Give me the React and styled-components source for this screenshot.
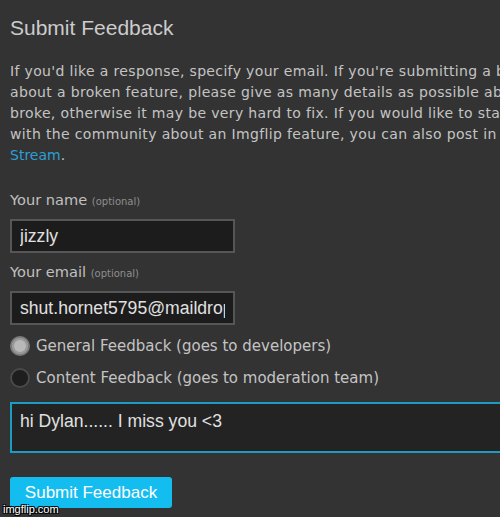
import React from "react";
import styled, { createGlobalStyle } from "styled-components";

const GlobalStyle = createGlobalStyle`
  html, body {
    margin: 0;
    padding: 0;
    background: #333333;
    overflow: hidden;
  }
  body {
    font-family: "DejaVu Sans", Verdana, sans-serif;
    color: #c8c8c8;
  }
`;

const Page = styled.div`
  position: relative;
  width: 500px;
  height: 517px;
  padding: 16px 0 0 10px;
  box-sizing: border-box;
  overflow: hidden;
`;

const Title = styled.h1`
  margin: 0;
  font-family: "Liberation Sans", Arial, sans-serif;
  font-weight: normal;
  font-size: 21px;
  line-height: 24px;
  color: #cccccc;
`;

const Intro = styled.p`
  margin: 21px 0 0;
  font-size: 14px;
  letter-spacing: 0.35px;
  line-height: 21px;
  white-space: nowrap;
  color: #c4c4c4;
`;

const Link = styled.a`
  color: #2a9fd6;
  letter-spacing: 0;
  text-decoration: none;
`;

const Label = styled.label`
  display: block;
  margin: ${(p) => p.$top}px 0 7px;
  font-size: 14.6px;
  line-height: 20px;
  color: #c0c0c0;
`;

const Optional = styled.span`
  font-size: 10px;
  color: #8e8e8e;
`;

const TextInput = styled.input`
  display: block;
  box-sizing: border-box;
  width: 225px;
  height: 34px;
  padding: 0 8px;
  border: 2px solid #565656;
  background: #1c1c1c;
  color: #e0e0e0;
  font-family: "Liberation Sans", Arial, sans-serif;
  font-size: 17.6px;
  outline: none;
`;

const Options = styled.div`
  display: flex;
  flex-direction: column;
  gap: 10px;
  margin-top: 10px;
`;

const Option = styled.label`
  display: flex;
  align-items: center;
  gap: 6px;
  height: 22px;
  font-size: 15px;
  color: #c4c4c4;
`;

const Radio = styled.span`
  box-sizing: border-box;
  width: 20px;
  height: 20px;
  border-radius: 50%;
  border: 2px solid ${(p) => (p.$checked ? "#7c7c7c" : "#4a4a4a")};
  background: ${(p) => (p.$checked ? "#b9b9b9" : "#1e1e1e")};
  box-shadow: ${(p) => (p.$checked ? "inset 0 0 0 2px #9a9a9a" : "none")};
`;

const Message = styled.textarea`
  display: block;
  box-sizing: border-box;
  margin-top: 13px;
  width: 560px;
  height: 51px;
  padding: 7px 8px;
  border: 2px solid #1c9cc4;
  background: #232323;
  color: #e0e0e0;
  font-family: "Liberation Sans", Arial, sans-serif;
  font-size: 17.6px;
  line-height: 21px;
  resize: none;
  outline: none;
`;

const SubmitButton = styled.button`
  display: block;
  margin-top: 24px;
  width: 162px;
  height: 31px;
  padding: 0;
  border: none;
  border-radius: 3px;
  background: #14bdf0;
  color: #ffffff;
  font-family: "Liberation Sans", Arial, sans-serif;
  font-size: 17px;
`;

const Watermark = styled.div`
  position: absolute;
  left: 3px;
  bottom: 2px;
  font-family: "Liberation Sans", Arial, sans-serif;
  font-size: 11px;
  color: #ffffff;
  text-shadow: -1px -1px 0 #000, 1px -1px 0 #000, -1px 1px 0 #000,
    1px 1px 0 #000;
`;

export default function App() {
  return (
    <>
      <GlobalStyle />
      <Page>
        <Title>Submit Feedback</Title>
        <Intro>
          If you'd like a response, specify your email. If you're submitting a bug report
          <br />
          about a broken feature, please give as many details as possible about what
          <br />
          broke, otherwise it may be very hard to fix. If you would like to start a discussion
          <br />
          with the community about an Imgflip feature, you can also post in the Imgflip
          <br />
          <Link href="#">Stream</Link>.
        </Intro>

        <Label $top={24}>
          Your name <Optional>(optional)</Optional>
        </Label>
        <TextInput defaultValue="jizzly" />

        <Label $top={9}>
          Your email <Optional>(optional)</Optional>
        </Label>
        <TextInput defaultValue="shut.hornet5795@maildrop.cc" />

        <Options>
          <Option>
            <Radio $checked />
            General Feedback (goes to developers)
          </Option>
          <Option>
            <Radio />
            Content Feedback (goes to moderation team)
          </Option>
        </Options>

        <Message defaultValue="hi Dylan...... I miss you <3" />

        <SubmitButton>Submit Feedback</SubmitButton>
        <Watermark>imgflip.com</Watermark>
      </Page>
    </>
  );
}
